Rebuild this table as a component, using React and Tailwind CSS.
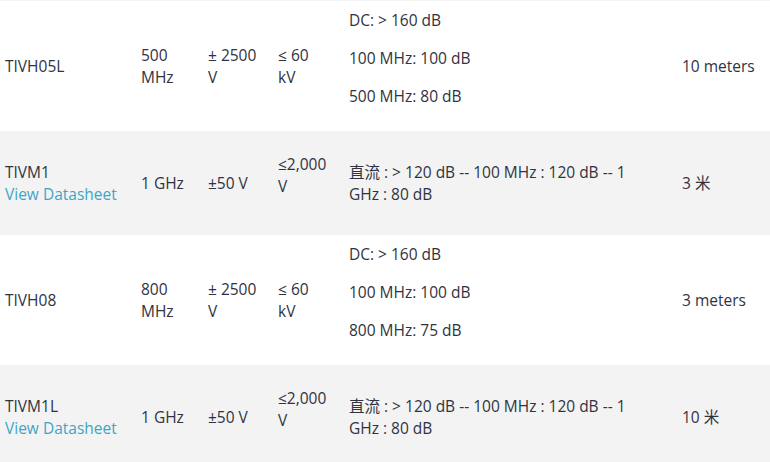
import React from 'react';

const rows = [
    {
        name: 'TIVH05L',
        bw: ['500', 'MHz'],
        range: ['± 2500', 'V'],
        cm: ['≤ 60', 'kV'],
        cmrr: ['DC: > 160 dB', '100 MHz: 100 dB', '500 MHz: 80 dB'],
        cable: '10 meters',
    },
    {
        name: 'TIVM1',
        link: true,
        bw: ['1 GHz'],
        range: ['±50 V'],
        cm: ['≤2,000', 'V'],
        cmPara: true,
        cmrrText: ['直流 : > 120 dB -- 100 MHz : 120 dB -- 1', 'GHz : 80 dB'],
        cable: '3 米',
    },
    {
        name: 'TIVH08',
        bw: ['800', 'MHz'],
        range: ['± 2500', 'V'],
        cm: ['≤ 60', 'kV'],
        cmrr: ['DC: > 160 dB', '100 MHz: 100 dB', '800 MHz: 75 dB'],
        cable: '3 meters',
    },
    {
        name: 'TIVM1L',
        link: true,
        bw: ['1 GHz'],
        range: ['±50 V'],
        cm: ['≤2,000', 'V'],
        cmPara: true,
        cmrrText: ['直流 : > 120 dB -- 100 MHz : 120 dB -- 1', 'GHz : 80 dB'],
        cable: '10 米',
    },
];

// two-line cell helper
const Lines = ({ lines }) => (
    <>
        {lines.map((l, i) => (
            <React.Fragment key={i}>
                {i > 0 && <br />}
                {l}
            </React.Fragment>
        ))}
    </>
);

const cell = 'px-[5px] py-2 align-middle text-left';

export default function App() {
    return (
        <div
            className="w-[770px] bg-white text-[15.5px] leading-[22px] text-[#30333f]"
            style={{ fontFamily: '"Open Sans", "Noto Sans CJK SC", sans-serif' }}
        >
            <div className="h-px bg-[#f3f3f3]" />
            <table className="w-full table-fixed border-collapse">
                <colgroup>
                    <col className="w-[136px]" />
                    <col className="w-[67px]" />
                    <col className="w-[70px]" />
                    <col className="w-[71px]" />
                    <col className="w-[333px]" />
                    <col />
                </colgroup>
                <tbody>
                    {rows.map((r, idx) => (
                        <tr
                            key={r.name}
                            className={idx % 2 === 1 ? 'h-[104px] bg-[#f3f3f3]' : 'h-[130px] bg-white'}
                        >
                            <td className={cell}>
                                {r.name}
                                {r.link && (
                                    <>
                                        <br />
                                        <a href="#" className="text-[#3ba6c9]">View Datasheet</a>
                                    </>
                                )}
                            </td>
                            <td className={cell}><Lines lines={r.bw} /></td>
                            <td className={cell}><Lines lines={r.range} /></td>
                            <td className={cell}>
                                {r.cmPara ? (
                                    <p className="mb-4"><Lines lines={r.cm} /></p>
                                ) : (
                                    <Lines lines={r.cm} />
                                )}
                            </td>
                            <td className={cell}>
                                {r.cmrr ? (
                                    r.cmrr.map(t => <p key={t} className="mb-4">{t}</p>)
                                ) : (
                                    <Lines lines={r.cmrrText} />
                                )}
                            </td>
                            <td className={cell}>{r.cable}</td>
                        </tr>
                    ))}
                </tbody>
            </table>
        </div>
    );
}
